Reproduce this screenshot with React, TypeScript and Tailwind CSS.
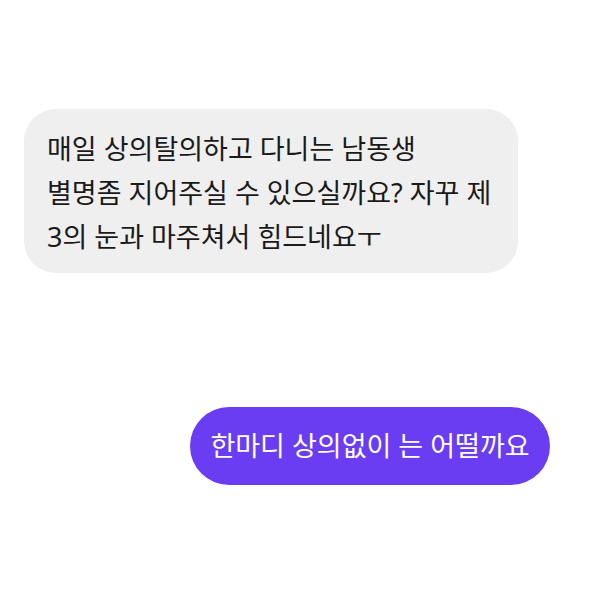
export default function App() {
  return (
    <div
      className="w-[600px] h-[600px] bg-white flex flex-col"
      style={{ fontFamily: '"Noto Sans", "Noto Sans CJK KR", sans-serif' }}
    >
      {/* Received message */}
      <div className="mt-[109px] ml-[24px] w-[494px] h-[164px] rounded-[32px] bg-[#efefef] pl-[23px] pt-[18px] text-[27px] leading-[44px] text-[#1a1a1a]">
        매일 상의탈의하고 다니는 남동생
        <br />
        별명좀 지어주실 수 있으실까요? 자꾸 제
        <br />
        3의 눈과 마주쳐서 힘드네요ㅜ
      </div>

      {/* Sent message */}
      <div className="mt-[134px] self-end mr-[50px] w-[360px] h-[78px] rounded-full bg-[#6a3df2] flex items-center justify-center text-[27px] text-white">
        한마디 상의없이 는 어떨까요
      </div>
    </div>
  );
}
